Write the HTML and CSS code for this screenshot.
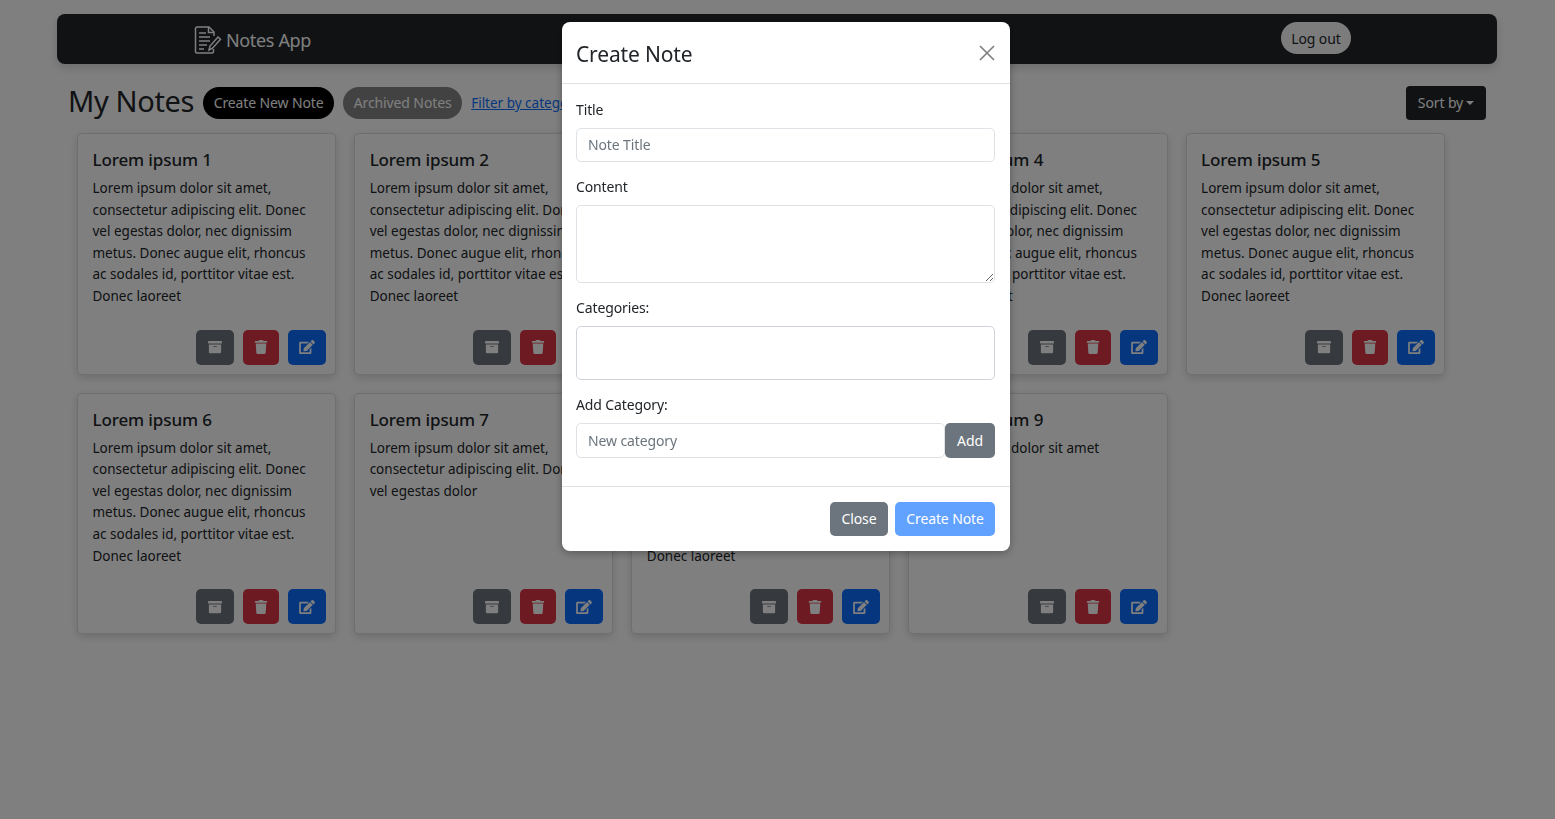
FILE: index.html
```html
<!DOCTYPE html>
<html lang="en">
<head>
    <meta charset="UTF-8">
    <meta name="viewport" content="width=device-width, initial-scale=1.0">
    <title>Notes App</title>
    <link rel="stylesheet" href="styles.css">
</head>
<body>
    <svg class="icon-defs" aria-hidden="true">
        <symbol id="i-archive" viewBox="0 0 512 512"><path d="M32 448c0 17.7 14.3 32 32 32h384c17.7 0 32-14.3 32-32V160H32v288zm160-212c0-6.6 5.4-12 12-12h104c6.6 0 12 5.4 12 12v8c0 6.6-5.4 12-12 12H204c-6.6 0-12-5.4-12-12v-8zM480 32H32C14.3 32 0 46.3 0 64v48c0 8.8 7.2 16 16 16h480c8.8 0 16-7.2 16-16V64c0-17.7-14.3-32-32-32z"/></symbol>
        <symbol id="i-trash" viewBox="0 0 448 512"><path d="M432 32H312l-9.4-18.7A24 24 0 0 0 281.1 0H166.8a23.72 23.72 0 0 0-21.4 13.3L136 32H16A16 16 0 0 0 0 48v32a16 16 0 0 0 16 16h416a16 16 0 0 0 16-16V48a16 16 0 0 0-16-16zM53.2 467a48 48 0 0 0 47.9 45h245.8a48 48 0 0 0 47.9-45L416 128H32z"/></symbol>
        <symbol id="i-edit" viewBox="0 0 576 512"><path d="M402.6 83.2l90.2 90.2c3.8 3.8 3.8 10 0 13.8L274.4 405.6l-92.8 10.3c-12.4 1.4-22.9-9.1-21.5-21.5l10.3-92.8L388.8 83.2c3.8-3.8 10-3.8 13.8 0zm162-22.9l-48.8-48.8c-15.2-15.2-39.9-15.2-55.2 0l-35.4 35.4c-3.8 3.8-3.8 10 0 13.8l90.2 90.2c3.8 3.8 10 3.8 13.8 0l35.4-35.4c15.2-15.3 15.2-40 0-55.2zM384 346.2V448H64V128h229.8c3.2 0 6.2-1.3 8.5-3.5l40-40c7.6-7.6 2.2-20.5-8.5-20.5H48C21.5 64 0 85.5 0 112v352c0 26.5 21.5 48 48 48h352c26.5 0 48-21.5 48-48V306.2c0-10.7-12.9-16-20.5-8.5l-40 40c-2.2 2.3-3.5 5.3-3.5 8.5z"/></symbol>
    </svg>

    <nav class="navbar">
        <a class="brand" href="#">
            <svg class="brand-icon" viewBox="0 0 28 28" fill="none" stroke="currentColor" stroke-width="1.5">
                <path d="M20 10V6l-5-5H3a1.5 1.5 0 0 0-1.500 1.500v23A1.500 1.500 0 0 0 3 27h15a1.500 1.500 0 0 0 1.500-1.500V23"/>
                <path d="M14.500 1v5.500H20"/>
                <path d="M5 7h7M5 11h11M5 15h11M5 19h8M5 23h5"/>
                <path d="M15 24l1-4 8-9 2.500 2.200-8 9z"/>
            </svg>
            Notes App
        </a>
        <button class="logout">Log out</button>
    </nav>

    <header class="toolbar">
        <h1>My Notes</h1>
        <button class="pill pill-dark">Create New Note</button>
        <button class="pill pill-grey">Archived Notes</button>
        <a class="filter" href="#">Filter by category</a>
        <button class="sort">Sort by</button>
    </header>

    <main class="notes">
        <article class="card">
            <h3>Lorem ipsum 1</h3>
            <p>Lorem ipsum dolor sit amet, consectetur adipiscing elit. Donec vel egestas dolor, nec dignissim metus. Donec augue elit, rhoncus ac sodales id, porttitor vitae est. Donec laoreet</p>
            <div class="actions">
                <button class="act act-archive"><svg class="ico"><use href="#i-archive"/></svg></button>
                <button class="act act-delete"><svg class="ico"><use href="#i-trash"/></svg></button>
                <button class="act act-edit"><svg class="ico"><use href="#i-edit"/></svg></button>
            </div>
        </article>
        <article class="card">
            <h3>Lorem ipsum 2</h3>
            <p>Lorem ipsum dolor sit amet, consectetur adipiscing elit. Donec vel egestas dolor, nec dignissim metus. Donec augue elit, rhoncus ac sodales id, porttitor vitae est. Donec laoreet</p>
            <div class="actions">
                <button class="act act-archive"><svg class="ico"><use href="#i-archive"/></svg></button>
                <button class="act act-delete"><svg class="ico"><use href="#i-trash"/></svg></button>
                <button class="act act-edit"><svg class="ico"><use href="#i-edit"/></svg></button>
            </div>
        </article>
        <article class="card">
            <h3>Lorem ipsum 3</h3>
            <p>Lorem ipsum dolor sit amet, consectetur adipiscing elit. Donec vel egestas dolor, nec dignissim metus. Donec augue elit, rhoncus ac sodales id, porttitor vitae est. Donec laoreet</p>
            <div class="actions">
                <button class="act act-archive"><svg class="ico"><use href="#i-archive"/></svg></button>
                <button class="act act-delete"><svg class="ico"><use href="#i-trash"/></svg></button>
                <button class="act act-edit"><svg class="ico"><use href="#i-edit"/></svg></button>
            </div>
        </article>
        <article class="card">
            <h3>Lorem ipsum 4</h3>
            <p>Lorem ipsum dolor sit amet, consectetur adipiscing elit. Donec vel egestas dolor, nec dignissim metus. Donec augue elit, rhoncus ac sodales id, porttitor vitae est. Donec laoreet</p>
            <div class="actions">
                <button class="act act-archive"><svg class="ico"><use href="#i-archive"/></svg></button>
                <button class="act act-delete"><svg class="ico"><use href="#i-trash"/></svg></button>
                <button class="act act-edit"><svg class="ico"><use href="#i-edit"/></svg></button>
            </div>
        </article>
        <article class="card">
            <h3>Lorem ipsum 5</h3>
            <p>Lorem ipsum dolor sit amet, consectetur adipiscing elit. Donec vel egestas dolor, nec dignissim metus. Donec augue elit, rhoncus ac sodales id, porttitor vitae est. Donec laoreet</p>
            <div class="actions">
                <button class="act act-archive"><svg class="ico"><use href="#i-archive"/></svg></button>
                <button class="act act-delete"><svg class="ico"><use href="#i-trash"/></svg></button>
                <button class="act act-edit"><svg class="ico"><use href="#i-edit"/></svg></button>
            </div>
        </article>
        <article class="card">
            <h3>Lorem ipsum 6</h3>
            <p>Lorem ipsum dolor sit amet, consectetur adipiscing elit. Donec vel egestas dolor, nec dignissim metus. Donec augue elit, rhoncus ac sodales id, porttitor vitae est. Donec laoreet</p>
            <div class="actions">
                <button class="act act-archive"><svg class="ico"><use href="#i-archive"/></svg></button>
                <button class="act act-delete"><svg class="ico"><use href="#i-trash"/></svg></button>
                <button class="act act-edit"><svg class="ico"><use href="#i-edit"/></svg></button>
            </div>
        </article>
        <article class="card">
            <h3>Lorem ipsum 7</h3>
            <p>Lorem ipsum dolor sit amet, consectetur adipiscing elit. Donec vel egestas dolor</p>
            <div class="actions">
                <button class="act act-archive"><svg class="ico"><use href="#i-archive"/></svg></button>
                <button class="act act-delete"><svg class="ico"><use href="#i-trash"/></svg></button>
                <button class="act act-edit"><svg class="ico"><use href="#i-edit"/></svg></button>
            </div>
        </article>
        <article class="card">
            <h3>Lorem ipsum 8</h3>
            <p>Lorem ipsum dolor sit amet, consectetur adipiscing elit. Donec vel egestas dolor, nec dignissim metus. Donec augue elit, rhoncus ac sodales id, porttitor vitae est. Donec laoreet</p>
            <div class="actions">
                <button class="act act-archive"><svg class="ico"><use href="#i-archive"/></svg></button>
                <button class="act act-delete"><svg class="ico"><use href="#i-trash"/></svg></button>
                <button class="act act-edit"><svg class="ico"><use href="#i-edit"/></svg></button>
            </div>
        </article>
        <article class="card">
            <h3>Lorem ipsum 9</h3>
            <p>Lorem ipsum dolor sit amet</p>
            <div class="actions">
                <button class="act act-archive"><svg class="ico"><use href="#i-archive"/></svg></button>
                <button class="act act-delete"><svg class="ico"><use href="#i-trash"/></svg></button>
                <button class="act act-edit"><svg class="ico"><use href="#i-edit"/></svg></button>
            </div>
        </article>
    </main>

    <div class="backdrop"></div>

    <div class="modal">
        <div class="modal-header">
            <h2>Create Note</h2>
            <button class="close" aria-label="Close">
                <svg viewBox="0 0 16 16" stroke="currentColor" stroke-width="1.7"><path d="M1 1l14 14M15 1L1 15"/></svg>
            </button>
        </div>
        <form class="modal-body">
            <label for="note-title">Title</label>
            <input type="text" id="note-title" placeholder="Note Title">

            <label for="note-content">Content</label>
            <textarea id="note-content"></textarea>

            <label for="note-cats">Categories:</label>
            <select id="note-cats" multiple></select>

            <label for="new-cat">Add Category:</label>
            <div class="input-group">
                <input type="text" id="new-cat" placeholder="New category">
                <button type="button" class="btn btn-grey">Add</button>
            </div>
        </form>
        <div class="modal-footer">
            <button class="btn btn-grey">Close</button>
            <button class="btn btn-blue">Create Note</button>
        </div>
    </div>
</body>
</html>
```

FILE: styles.css
```css
* {
    box-sizing: border-box;
}
body {
    margin: 0;
    height: 819px;
    overflow: hidden;
    background-color: #fff;
    color: #212529;
    font-family: "Noto Sans", sans-serif;
    font-size: 14px;
    letter-spacing: -0.12px;
}
button {
    font-family: inherit;
    letter-spacing: inherit;
    cursor: pointer;
}
.icon-defs {
    display: none;
}

.navbar {
    display: flex;
    justify-content: space-between;
    align-items: center;
    height: 50px;
    margin: 14px 58px 0 57px;
    padding: 0 146px 2px 137px;
    background-color: #212529;
    border-radius: 8px;
    box-shadow: 0 4px 10px rgba(0, 0, 0, 0.15);
}
.brand {
    display: flex;
    align-items: center;
    gap: 4px;
    padding-top: 3px;
    color: #fff;
    font-size: 18px;
    letter-spacing: -0.35px;
    text-decoration: none;
}
.brand-icon {
    width: 28px;
    height: 28px;
}
.logout {
    height: 32px;
    width: 70px;
    padding: 0;
    border: none;
    border-radius: 16px;
    background-color: #f8f9fa;
    color: #212529;
    font-size: 14px;
}

.toolbar {
    display: flex;
    align-items: center;
    height: 34px;
    margin: 22px 69px 0 68px;
}
.toolbar h1 {
    margin: 0 9px 6px 0;
    font-size: 29px;
    font-weight: 400;
    letter-spacing: -0.35px;
}
.pill {
    height: 32px;
    padding: 0 0 2px;
    border: none;
    border-radius: 16px;
    color: #fff;
    font-size: 14px;
}
.pill-dark {
    width: 131px;
    background-color: #000;
    margin-right: 9px;
}
.pill-grey {
    width: 119px;
    background-color: #858585;
    margin-right: 9px;
}
.filter {
    color: #0d6efd;
    font-size: 13.500px;
    letter-spacing: 0;
}
.sort {
    display: flex;
    align-items: center;
    justify-content: center;
    height: 34px;
    width: 80px;
    margin-left: auto;
    padding: 0 0 2px;
    border: none;
    border-radius: 4px;
    background-color: #212529;
    color: #fff;
    font-size: 14px;
}
.sort::after {
    content: "";
    margin: 2px 0 0 3px;
    border-top: 4px solid #fff;
    border-left: 4px solid transparent;
    border-right: 4px solid transparent;
}

.notes {
    display: grid;
    grid-template-columns: repeat(5, 259.150px);
    grid-auto-rows: 241.700px;
    gap: 18px;
    margin: 13px 0 0 77px;
}
.card {
    display: flex;
    flex-direction: column;
    padding: 15px 9px 9px 14.500px;
    background-color: #fff;
    border: 1px solid rgba(0, 0, 0, 0.125);
    border-radius: 5px;
    box-shadow: 0 3px 8px rgba(0, 0, 0, 0.15);
}
.card h3 {
    margin: 0 0 8px;
    font-size: 17px;
    font-weight: 500;
    line-height: 21px;
    letter-spacing: -0.12px;
}
.card p {
    margin: 0;
    padding-right: 6px;
    font-size: 13.500px;
    line-height: 21.600px;
    letter-spacing: 0;
}
.actions {
    display: flex;
    justify-content: flex-end;
    gap: 9px;
    margin-top: auto;
}
.act {
    display: flex;
    align-items: center;
    justify-content: center;
    height: 35px;
    width: 38px;
    padding: 0;
    border: none;
    border-radius: 5px;
    color: #fff;
}
.act-archive {
    background-color: #6c757d;
}
.act-delete {
    width: 36px;
    background-color: #dc3545;
}
.act-edit {
    background-color: #0d6efd;
}
.ico {
    width: 16px;
    height: 14px;
    fill: currentColor;
}

.backdrop {
    position: fixed;
    inset: 0;
    background-color: rgba(0, 0, 0, 0.5);
}
.modal {
    position: fixed;
    top: 22px;
    left: 562px;
    width: 448px;
    height: 529px;
    background-color: #fff;
    border-radius: 8px;
    box-shadow: 0 2px 8px rgba(0, 0, 0, 0.3);
}
.modal-header {
    display: flex;
    align-items: center;
    justify-content: space-between;
    height: 62px;
    padding: 2px 15px 0 14px;
    border-bottom: 1px solid #dee2e6;
}
.modal-header h2 {
    margin: 0;
    font-size: 21px;
    font-weight: 400;
    letter-spacing: -0.15px;
}
.close {
    width: 16px;
    height: 16px;
    padding: 0;
    margin-bottom: 2px;
    border: none;
    background: none;
    color: #808080;
}
.close svg {
    display: block;
}
.modal-body {
    display: flex;
    flex-direction: column;
    height: 403px;
    padding: 16px 15px 0 14px;
    border-bottom: 1px solid #dee2e6;
}
.modal-body label {
    height: 19px;
    margin-bottom: 9px;
    line-height: 19px;
}
.modal-body input,
.modal-body textarea,
.modal-body select {
    display: block;
    width: 100%;
    border: 1px solid #dee2e6;
    border-radius: 5px;
    padding: 0 11px;
    background-color: #fff;
    color: #212529;
    font-family: inherit;
    font-size: 14px;
    letter-spacing: inherit;
    outline: none;
}
.modal-body input {
    height: 34px;
    margin-bottom: 15px;
    padding-bottom: 1px;
}
.modal-body input::placeholder {
    color: #6c757d;
}
.modal-body textarea {
    height: 78px;
    margin-bottom: 15px;
    resize: vertical;
}
.modal-body select {
    height: 54px;
    margin-bottom: 15px;
    border-color: #ced4da;
}
.input-group {
    display: flex;
}
.input-group input {
    flex: 1;
    height: 35px;
    margin-bottom: 0;
}
.btn {
    height: 34px;
    border: none;
    border-radius: 5px;
    color: #fff;
    font-size: 14px;
    padding: 0;
}
.btn-grey {
    background-color: #6c757d;
}
.btn-blue {
    background-color: #61a1ff;
    width: 100px;
}
.input-group .btn {
    width: 50px;
    height: 35px;
}
.modal-footer {
    display: flex;
    justify-content: flex-end;
    gap: 7px;
    padding: 15px 15px 0 0;
}
.modal-footer .btn {
    padding-bottom: 2px;
}
.modal-footer .btn-grey {
    width: 58px;
}
```
